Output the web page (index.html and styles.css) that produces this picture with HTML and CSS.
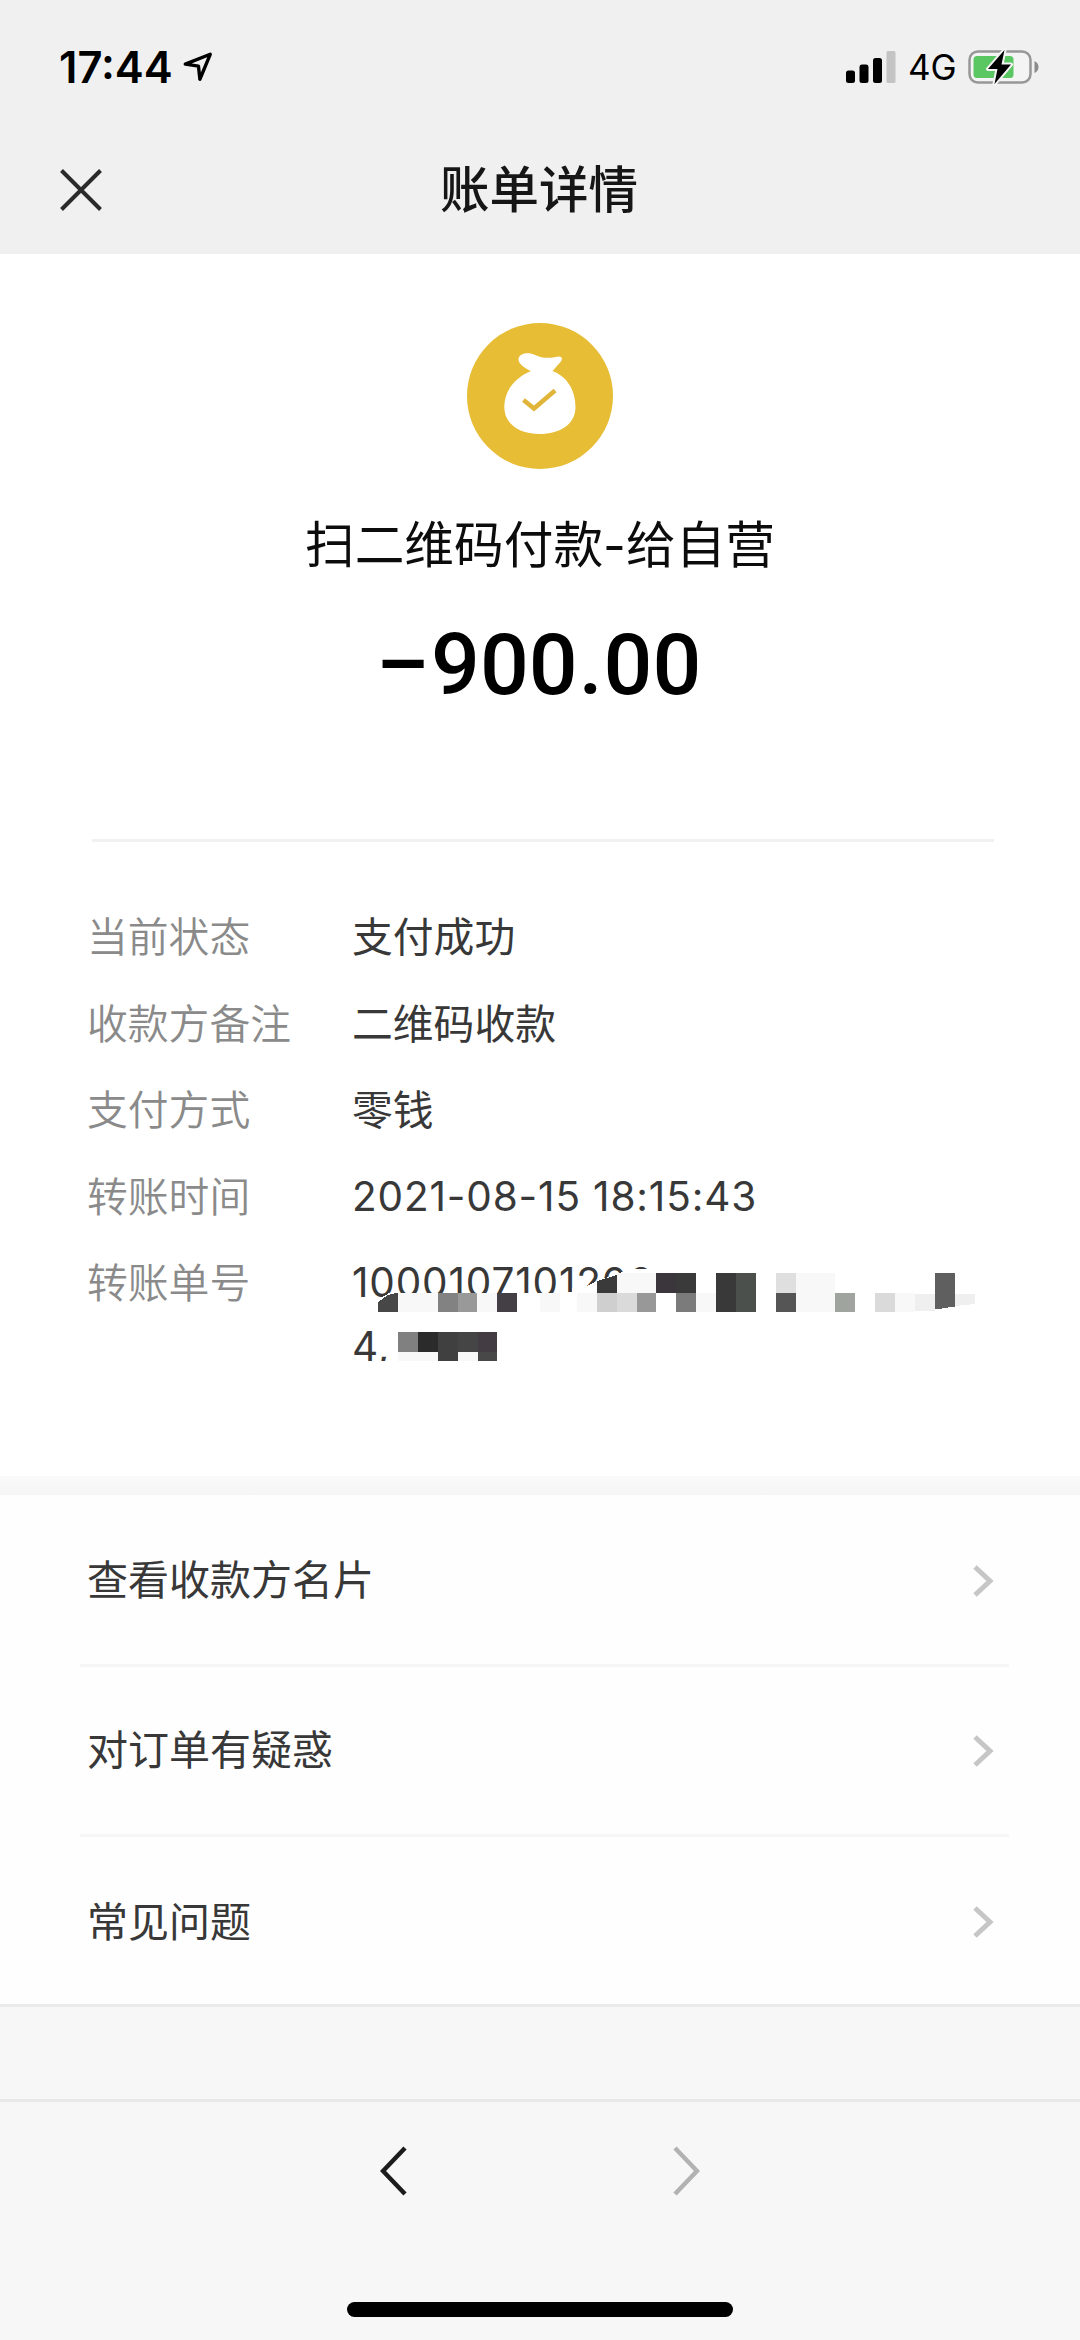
FILE: index.html
```html
<!DOCTYPE html>
<html lang="zh-CN">
<head>
<meta charset="utf-8">
<title>账单详情</title>
<link rel="stylesheet" href="styles.css">
</head>
<body>
<div class="screen">
  <header class="header">
    <div class="status">
      <span class="clock">17:44</span>
      <svg class="location" width="32" height="32" viewBox="0 0 34 34"><path d="M3.500 14 30 3.500 19 30 17.500 16Z" fill="none" stroke="#000" stroke-width="3.600" stroke-linejoin="round"/></svg>
      <svg class="signal" width="50" height="32" viewBox="0 0 50 32"><rect x="0" y="19.500" width="9" height="12.500" rx="2.500"/><rect x="13.500" y="13.500" width="9" height="18.500" rx="2.500"/><rect x="27" y="7" width="9" height="25" rx="2.500"/><rect x="40.500" y="0" width="9" height="32" rx="1.500" fill="#c4c4c4"/></svg>
      <span class="network">4G</span>
      <svg class="battery" width="72" height="38" viewBox="0 0 72 38">
        <rect x="1.500" y="3.500" width="61" height="31" rx="8.500" fill="#f4f4f4" stroke="#979797" stroke-width="2.500"/>
        <rect x="5.500" y="8" width="40" height="22" rx="3.500" fill="#5bc763"/>
        <path d="M66.500 13Q70.500 15 70.500 19T66.500 25Z" fill="#8a8a8a"/>
        <path d="M36.500 2 20 21H29.500L26.500 36 43 16.500H33.500Z" stroke="#f4f4f4" stroke-width="4" stroke-linejoin="round"/>
        <path d="M36.500 2 20 21H29.500L26.500 36 43 16.500H33.500Z"/>
      </svg>
    </div>
    <div class="navbar">
      <svg class="close" width="44" height="44" viewBox="0 0 44 44"><path d="M2.500 2.500 41.500 41.500M41.500 2.500 2.500 41.500" stroke="#2a2a2a" stroke-width="4"/></svg>
      <h1 class="title">账单详情</h1>
    </div>
  </header>

  <main class="bill">
    <section class="summary">
      <svg class="avatar" width="146" height="146" viewBox="0 0 146 146">
        <circle cx="73" cy="73" r="73" fill="#e6bd35"/>
        <path d="M51.500 36C52 30 62 29 68 32 77 36 83 35 92 33.500 95 33.500 96 36 93.500 39L85.500 48C99 53 108.500 66 108.500 84 108.500 102 92 111 73 111 52 111 37.300 101 37.300 84 37.300 67 49 54 64 48 59 46 51 41 51.500 36Z" fill="#fff"/>
        <path d="M56.500 77 67 85.500 88 67.500" fill="none" stroke="#e0b53a" stroke-width="4.500"/>
      </svg>
      <p class="payee">扫二维码付款<span class="hyphen">-</span>给自营</p>
      <p class="amount"><span class="minus">−</span>900<span class="point">.</span>00</p>
    </section>

    <dl class="details">
      <div class="row"><dt>当前状态</dt><dd>支付成功</dd></div>
      <div class="row"><dt>收款方备注</dt><dd>二维码收款</dd></div>
      <div class="row"><dt>支付方式</dt><dd>零钱</dd></div>
      <div class="row"><dt>转账时间</dt><dd class="numeric">2021-08-15 18:15:43</dd></div>
      <div class="row serial"><dt>转账单号</dt>
        <dd class="numeric">1000107101200<br>4,
          <svg class="mosaic" width="640" height="120" viewBox="350 1260 640 120" shape-rendering="crispEdges">
            <path d="M372 1303 390 1292.500H568L579 1290 597 1281 622 1272 626 1269H660V1314H378ZM572 1292V1288H585V1293ZM375 1360.500H350V1378H500V1360.500ZM388 1330H398V1361H388Z" fill="#fff"/>
            <path d="M378 1312V1302L388 1295 398 1292.500V1312Z" fill="#474747"/>
            <path d="M398 1292.500h40v19.500h-40zM477 1292.500h20v19.500h-20zM540 1292.500h20v19.500h-20zM577 1292.500h20v19.500h-20zM617 1273h39v19.500h-39zM696 1292.500h20v19.500h-20zM796 1273h39v39h-39zM895 1292.500h20v19.500h-20zM398 1352h39.500v8.500h-39.500zM457.500 1352h20v8.500h-20z" fill="#f8f8f8"/>
            <path d="M438 1292.500h20v19.500h-20z" fill="#828282"/>
            <path d="M458 1292.500h19v19.500h-19z" fill="#999"/>
            <path d="M497 1292.500h20v19.500h-20z" fill="#443f44"/>
            <path d="M597 1292.500h20v19.500h-20z" fill="#cfcfcf"/>
            <path d="M617 1292.500h20v19.500h-20z" fill="#dadada"/>
            <path d="M637 1292.500h19v19.500h-19z" fill="#989898"/>
            <path d="M597 1292.500V1281L617 1275V1292.500ZM676 1273h20v19.500h-20z" fill="#3a3a3a"/>
            <path d="M656 1273h20v19.500h-20z" fill="#3b363c"/>
            <path d="M676 1292.500h20v19.500h-20z" fill="#7b7b7b"/>
            <path d="M716 1273h20v39h-20z" fill="#393939"/>
            <path d="M736 1273h20v39h-20z" fill="#4c504c"/>
            <path d="M776 1273h20v19.500h-20z" fill="#dfdfdf"/>
            <path d="M776 1292.500h20v19.500h-20z" fill="#555"/>
            <path d="M835 1292.500h20v19.500h-20z" fill="#a0a49f"/>
            <path d="M875 1292.500h20v19.500h-20z" fill="#dadada"/>
            <path d="M915 1294h20v17h-20zM955 1294h20v10l-20 2z" fill="#efefef"/>
            <path d="M935 1273h20v33.500l-20 3z" fill="#5f5f5f"/>
            <path d="M398 1332h20v20h-20z" fill="#808080"/>
            <path d="M418 1332h20v20h-20z" fill="#2b2b2b"/>
            <path d="M438 1332h20v28.500h-20z" fill="#404040"/>
            <path d="M458 1332h20v20h-20z" fill="#454545"/>
            <path d="M478 1332h19v20h-19z" fill="#433d43"/>
            <path d="M478 1352h19v8.500h-19z" fill="#484848"/>
          </svg>
        </dd>
      </div>
    </dl>
  </main>

  <div class="separator"></div>

  <nav class="links">
    <a class="link"><span>查看收款方名片</span><svg width="22" height="34" viewBox="0 0 22 34"><path d="M3 3 18 17 3 31" fill="none" stroke="#c6c6c6" stroke-width="5"/></svg></a>
    <a class="link"><span>对订单有疑惑</span><svg width="22" height="34" viewBox="0 0 22 34"><path d="M3 3 18 17 3 31" fill="none" stroke="#c6c6c6" stroke-width="5"/></svg></a>
    <a class="link"><span>常见问题</span><svg width="22" height="34" viewBox="0 0 22 34"><path d="M3 3 18 17 3 31" fill="none" stroke="#c6c6c6" stroke-width="5"/></svg></a>
  </nav>

  <footer class="toolbar">
    <div class="history">
      <svg width="28" height="52" viewBox="0 0 28 52"><path d="M25 3 3 26 25 49" fill="none" stroke="#1c1c1c" stroke-width="4.500"/></svg>
      <svg width="28" height="52" viewBox="0 0 28 52"><path d="M3 3 25 26 3 49" fill="none" stroke="#b2b2b2" stroke-width="4.500"/></svg>
    </div>
    <div class="home-bar"></div>
  </footer>
</div>
</body>
</html>
```
FILE: styles.css
```css
* { box-sizing: border-box; margin: 0; padding: 0; }

body {
  width: 1080px;
  background: #f7f7f7;
  font-family: "Noto Sans CJK SC", sans-serif;
}

svg { display: block; flex: none; }

.screen {
  width: 1080px;
  height: 2340px;
  display: flex;
  flex-direction: column;
  overflow: hidden;
}

.header { height: 254px; background: #f0f0f0; flex: none; }

.status {
  height: 134px;
  padding: 0 40px 0 58px;
  display: flex;
  align-items: center;
  font-family: Inter, sans-serif;
  color: #000;
}
.clock { font-size: 43.500px; font-weight: 600; width: 124px; padding-left: 1px; line-height: 50px; margin-bottom: 1px; white-space: nowrap; }
.signal { margin-left: auto; }
.network { font-size: 35px; width: 60px; margin-left: 12px; }

.navbar {
  height: 119px;
  padding: 0 61px 0 59px;
  display: grid;
  grid-template-columns: 44px 1fr 44px;
  align-items: start;
}
.close { margin-top: 34px; }
.title {
  margin-top: 18px;
  text-align: center;
  font-size: 49.500px;
  line-height: 70px;
  font-weight: 500;
  color: #161616;
}

.bill { height: 1222px; background: #fff; padding: 69px 86px 0; flex: none; }

.summary {
  height: 519px;
  display: flex;
  flex-direction: column;
  align-items: center;
  margin-left: 6px;
  padding-right: 6px;
  border-bottom: 3px solid #f1f1f1;
}
.payee {
  margin-top: 36px;
  font-size: 49.700px;
  line-height: 72px;
  color: #0c0c0c;
}
.hyphen { font-family: Inter, sans-serif; }
.amount {
  margin-top: 34px;
  font-family: Roboto, sans-serif;
  font-size: 86px;
  font-weight: 500;
  line-height: 100px;
  color: #000;
}
.minus { display: inline-block; transform: scaleX(1.150); margin-right: 4px; }
.point { margin: 0 1px; }

.details { padding-top: 61px; }
.row {
  display: grid;
  grid-template-columns: 266px 1fr;
  font-size: 40.800px;
  line-height: 63.500px;
  margin-bottom: 23px;
}
.row dt { color: #8a8a8a; font-weight: 350; padding-left: 1px; }
.row dd { color: #383838; white-space: nowrap; }
.row .numeric {
  margin: 2px 0 -2px;
  font-family: Inter, sans-serif;
  font-size: 40.500px;
  letter-spacing: 0.850px;
}
.serial dd { position: relative; }
.mosaic { position: absolute; left: -2px; top: 9px; }

.separator {
  height: 19px;
  flex: none;
  background: linear-gradient(#fafafa, #f5f5f5);
}

.links { height: 509px; padding: 2px 71px 0 80px; background: #fefefe; flex: none; }
.link {
  height: 170px;
  padding: 0 15px 0 7px;
  display: flex;
  align-items: center;
  justify-content: space-between;
  border-bottom: 3px solid #f6f6f6;
  font-size: 41px;
  color: #383838;
}
.link span { line-height: 60px; margin-bottom: 7px; }
.link:last-child { border-bottom: 0; }

.toolbar { flex: 1; padding-top: 92px; border-top: 3px solid #ebebeb; }
.history {
  height: 203px;
  padding: 43px 380px 0;
  border-top: 3px solid #e8e8e8;
  display: flex;
  justify-content: space-between;
}
.home-bar { width: 386px; height: 15px; margin: 0 auto; border-radius: 8px; background: #000; }
```
